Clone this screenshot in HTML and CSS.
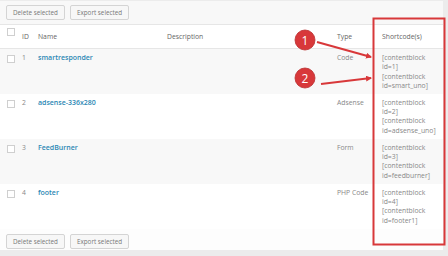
FILE: index.html
```html
<!DOCTYPE html>
<html lang="en">

<head>
  <meta charset="UTF-8">
  <meta name="viewport" content="width=device-width, initial-scale=1">
  <title>Content Blocks</title>
  <link rel="stylesheet" href="styles.css">
</head>

<body>

  <div class="panel">
    <div class="tablenav top">
      <button>Delete selected</button>
      <button>Export selected</button>
    </div>

    <table class="blocks">
      <colgroup>
        <col class="col-cb">
        <col class="col-id">
        <col class="col-name">
        <col class="col-desc">
        <col class="col-type">
        <col class="col-code">
      </colgroup>
      <thead>
        <tr>
          <th class="cb"><span class="check"></span></th>
          <th>ID</th>
          <th>Name</th>
          <th>Description</th>
          <th>Type</th>
          <th>Shortcode(s)</th>
        </tr>
      </thead>
      <tbody>
        <tr class="alt">
          <td class="cb"><span class="check"></span></td>
          <td class="num">1</td>
          <td><a href="#">smartresponder</a></td>
          <td></td>
          <td class="muted">Code</td>
          <td class="code">[contentblock<br>id=1]<br>[contentblock<br>id=smart_uno]</td>
        </tr>
        <tr>
          <td class="cb"><span class="check"></span></td>
          <td class="num">2</td>
          <td><a href="#">adsense-336x280</a></td>
          <td></td>
          <td class="muted">Adsense</td>
          <td class="code">[contentblock<br>id=2]<br>[contentblock<br>id=adsense_uno]</td>
        </tr>
        <tr class="alt">
          <td class="cb"><span class="check"></span></td>
          <td class="num">3</td>
          <td><a href="#">FeedBurner</a></td>
          <td></td>
          <td class="muted">Form</td>
          <td class="code">[contentblock<br>id=3]<br>[contentblock<br>id=feedburner]</td>
        </tr>
        <tr>
          <td class="cb"><span class="check"></span></td>
          <td class="num">4</td>
          <td><a href="#">footer</a></td>
          <td></td>
          <td class="muted">PHP Code</td>
          <td class="code">[contentblock<br>id=4]<br>[contentblock<br>id=footer1]</td>
        </tr>
      </tbody>
    </table>

    <div class="tablenav bottom">
      <button>Delete selected</button>
      <button>Export selected</button>
    </div>
  </div>

  <!-- annotation layer drawn over the screenshot -->
  <svg class="notes" width="448" height="256" viewBox="0 0 448 256">
    <defs>
      <marker id="head" markerWidth="6" markerHeight="6" refX="5" refY="3" orient="auto" markerUnits="userSpaceOnUse">
        <path d="M0,0 L6,3 L0,6 z" fill="#d8383a"></path>
      </marker>
    </defs>
    <rect x="373.5" y="18.5" width="71" height="226" fill="none" stroke="#d8383a" stroke-width="2"></rect>
    <line x1="317" y1="42" x2="371" y2="57" stroke="#d8383a" stroke-width="2" marker-end="url(#head)"></line>
    <line x1="321" y1="84" x2="371" y2="78" stroke="#d8383a" stroke-width="2" marker-end="url(#head)"></line>
    <circle cx="305" cy="40" r="10" fill="#d8383a" stroke="#b92d2f" stroke-width="0.8"></circle>
    <circle cx="305" cy="78" r="10" fill="#d8383a" stroke="#b92d2f" stroke-width="0.8"></circle>
    <text x="305" y="44.5" class="badge">1</text>
    <text x="305" y="82.5" class="badge">2</text>
  </svg>

</body>

</html>
```

FILE: styles.css
```css
body {
  margin: 0;
  padding: 0;
  background: #ececec;
  font-family: "Open Sans", Arial, sans-serif;
  font-size: 6.8px;
  color: #666;
  position: relative;
  width: 448px;
  height: 256px;
  overflow: hidden;
}

.panel {
  width: 443px;
  height: 249px;
  margin-top: 1px;
  background: #fdfdfd;
  display: flex;
  flex-direction: column;
}

.tablenav {
  display: flex;
  gap: 5px;
  padding-left: 6px;
}

.tablenav.top {
  height: 23px;
  padding-top: 4px;
  box-sizing: border-box;
  background: #f8f8f8;
}

.tablenav.bottom {
  padding-top: 5px;
}

button {
  height: 15px;
  padding: 0 6px;
  border: 1px solid #d4d4d4;
  border-radius: 2px;
  background: #f7f7f7;
  color: #777;
  font-family: "Open Sans", Arial, sans-serif;
  font-size: 6.3px;
  line-height: 13px;
}

/* list table */
.blocks {
  width: 443px;
  border-collapse: collapse;
  table-layout: fixed;
  background: #fff;
}

.col-cb { width: 19px; }
.col-id { width: 16px; }
.col-name { width: 129px; }
.col-desc { width: 170px; }
.col-type { width: 45px; }
.col-code { width: 64px; }

th {
  height: 24px;
  padding: 0 3px;
  text-align: left;
  font-weight: normal;
  color: #666;
  border-top: 1px solid #e6e6e6;
  border-bottom: 1px solid #e6e6e6;
  box-sizing: border-box;
}

td {
  height: 45px;
  padding: 4px 3px 0;
  vertical-align: top;
  line-height: 9.4px;
  box-sizing: border-box;
}

tr.alt td {
  background: #f8f8f8;
}

th.cb,
td.cb {
  padding: 0 0 0 7px;
}

th.cb {
  vertical-align: top;
  padding-top: 3px;
}

td.cb {
  padding-top: 6px;
}

.check {
  display: block;
  width: 8px;
  height: 8px;
  border: 1px solid #cfcfcf;
  background: #fff;
  box-sizing: border-box;
}

.num {
  color: #888;
}

a {
  color: #2b87b4;
  font-weight: 600;
  font-size: 7px;
  text-decoration: none;
}

.muted {
  color: #888;
}

.code {
  color: #888;
}

.notes {
  position: absolute;
  top: 0;
  left: 0;
}

.badge {
  fill: #fff;
  font-family: "Open Sans", Arial, sans-serif;
  font-size: 12px;
  text-anchor: middle;
}
```
